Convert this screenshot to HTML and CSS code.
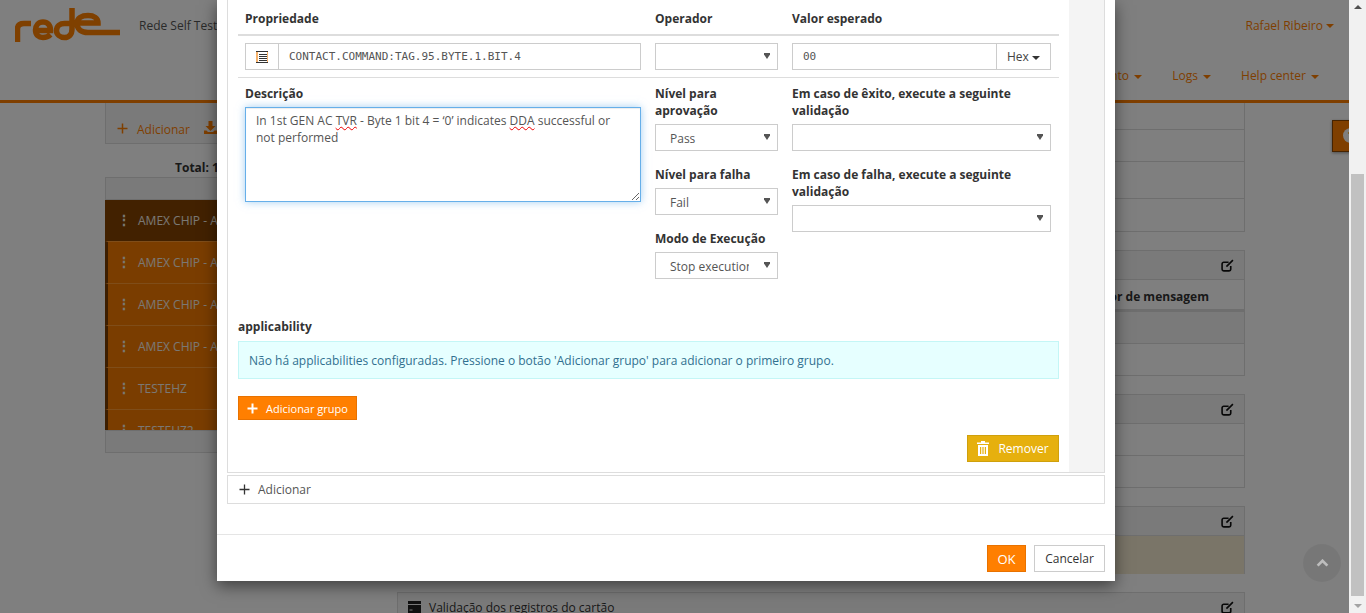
FILE: index.html
```html
<!DOCTYPE html>
<html lang="pt">
<head>
<meta charset="utf-8">
<title>Rede Self Test</title>
<link rel="stylesheet" href="styles.css">
</head>
<body>
<div class="viewport">
  <div class="page">
    <header class="site-header">
      <div class="brand">
        <svg class="logo" viewBox="0 0 105 34" width="105" height="34" aria-label="rede">
          <path d="M2.500 34V21C2.500 17 5 15.500 9 15.500H16M20.500 22.500H35.500C35.500 17 32.500 14 28 14C23.500 14 20.500 17.500 20.500 22C20.500 27 23.500 29.500 28 29.500C31 29.500 33.500 28.500 35.500 26.500M57 0V21C57 26.500 54 29.500 49.500 29.500C45 29.500 41.500 26.500 41.500 22.500C41.500 18 45 15.500 49.500 15.500H57M62 15H83C83 10 79 7.500 73 7.500C66.500 7.500 62 10 62 15.500C62 21 66 24.500 73 24.500H105" />
        </svg>
        <span class="brand-name">Rede Self Test</span>
        <span class="user">Rafael Ribeiro <i class="caret"></i></span>
      </div>
      <nav class="main-nav">
        <a>Relatório <i class="caret"></i></a>
        <a>Pagamento <i class="caret"></i></a>
        <a>Logs <i class="caret"></i></a>
        <a>Help center <i class="caret"></i></a>
      </nav>
    </header>
    <main class="workspace">
      <section class="side">
        <div class="side-tools">
          <svg class="tool-plus" viewBox="0 0 11 11" width="11" height="11"><path d="M5.500 0.500v10M0.500 5.500h10"/></svg>
          <span>Adicionar</span>
          <svg class="tool-down" viewBox="0 0 13 13" width="13" height="13"><path d="M4.500 0h4v5h3l-5 5-5-5h3zM0 9.500h2.500l1.500 1.500h5l1.500-1.500H13V13H0z"/></svg>
        </div>
        <div class="total">Total: 1</div>
        <div class="suite-list">
          <div class="suite-head"></div>
          <div class="suite-rows">
            <div class="suite suite-active"><b>⋮</b>AMEX CHIP - A</div>
            <div class="suite"><b>⋮</b>AMEX CHIP - A</div>
            <div class="suite"><b>⋮</b>AMEX CHIP - A</div>
            <div class="suite"><b>⋮</b>AMEX CHIP - A</div>
            <div class="suite"><b>⋮</b>TESTEHZ</div>
            <div class="suite"><b>⋮</b>TESTEHZ2</div>
          </div>
          <div class="suite-foot"></div>
        </div>
      </section>
      <section class="cards">
        <div class="card card-a"><div class="line"></div><div class="line"></div><div class="line"></div></div>
        <div class="card card-b">
          <div class="card-head"><svg class="edit" viewBox="0 0 12 12"><path d="M9 6.500V9.500a1.500 1.500 0 0 1-1.500 1.500H2.500A1.500 1.500 0 0 1 1 9.500V4.500A1.500 1.500 0 0 1 2.500 3H7M5 7l6-6"/></svg></div>
          <div class="card-th">Identificador de mensagem</div>
          <div class="card-row tint"></div>
          <div class="card-row"></div>
        </div>
        <div class="card card-c">
          <div class="card-head"><svg class="edit" viewBox="0 0 12 12"><path d="M9 6.500V9.500a1.500 1.500 0 0 1-1.500 1.500H2.500A1.500 1.500 0 0 1 1 9.500V4.500A1.500 1.500 0 0 1 2.500 3H7M5 7l6-6"/></svg></div>
          <div class="card-row"></div>
          <div class="card-row"></div>
        </div>
        <div class="card card-d">
          <div class="card-head"><svg class="edit" viewBox="0 0 12 12"><path d="M9 6.500V9.500a1.500 1.500 0 0 1-1.500 1.500H2.500A1.500 1.500 0 0 1 1 9.500V4.500A1.500 1.500 0 0 1 2.500 3H7M5 7l6-6"/></svg></div>
          <div class="card-note"></div>
        </div>
        <div class="card card-e">
          <div class="card-head card-head-title">
            <svg class="card-icon" viewBox="0 0 13 12"><path d="M0 0h13v3H0zM0 4h13v8H0zM1.500 8.500v1h3v-1z" fill-rule="evenodd"/></svg>
            <span>Validação dos registros do cartão</span>
            <svg class="edit" viewBox="0 0 12 12"><path d="M9 6.500V9.500a1.500 1.500 0 0 1-1.500 1.500H2.500A1.500 1.500 0 0 1 1 9.500V4.500A1.500 1.500 0 0 1 2.500 3H7M5 7l6-6"/></svg>
          </div>
        </div>
      </section>
    </main>
    <div class="help-tab"><span>?</span></div>
    <div class="overlay"></div>
    <div class="to-top"><svg viewBox="0 0 14 9" width="13" height="8"><path d="M1.500 7.500L7 2l5.500 5.500"/></svg></div>
    <div class="modal">
      <div class="modal-body">
        <div class="rule-panel">
          <div class="rule-form">
            <div class="form-grid form-heads">
              <label class="lbl">Propriedade</label>
              <label class="lbl">Operador</label>
              <label class="lbl">Valor esperado</label>
            </div>
            <div class="form-grid form-inputs">
              <div class="prop-group">
                <span class="prop-addon">
                  <svg viewBox="0 0 12 12" width="12" height="12"><rect width="12" height="12" fill="#f6b26b"/><rect x="2" y="1" width="9" height="10" fill="#fff"/><path d="M0 0.500h12M3 3.500h8M3 5.500h8M3 7.500h8M3 9.500h8M0 11.500h12" stroke="#333" fill="none"/></svg>
                </span>
                <input class="mono-input" type="text" value="CONTACT.COMMAND:TAG.95.BYTE.1.BIT.4">
              </div>
              <select class="sel"><option></option></select>
              <div class="value-group">
                <input class="mono-input" type="text" value="00">
                <span class="hex-btn">Hex <i class="caret caret-dark"></i></span>
              </div>
            </div>
            <div class="form-grid form-detail">
              <div class="field">
                <label class="lbl lbl-field">Descrição</label>
                <div class="desc-box">In 1st GEN AC <span class="typo">TVR</span> - Byte 1 bit 4 = ‘0’ indicates <span class="typo">DDA</span> successful or not performed</div>
              </div>
              <div class="field-stack">
                <div class="field">
                  <label class="lbl lbl-field">Nível para aprovação</label>
                  <select class="sel"><option>Pass</option></select>
                </div>
                <div class="field">
                  <label class="lbl lbl-field">Nível para falha</label>
                  <select class="sel"><option>Fail</option></select>
                </div>
                <div class="field">
                  <label class="lbl lbl-field">Modo de Execução</label>
                  <select class="sel"><option>Stop execution</option></select>
                </div>
              </div>
              <div class="field-stack">
                <div class="field">
                  <label class="lbl lbl-field">Em caso de êxito, execute a seguinte validação</label>
                  <select class="sel"><option></option></select>
                </div>
                <div class="field">
                  <label class="lbl lbl-field">Em caso de falha, execute a seguinte validação</label>
                  <select class="sel"><option></option></select>
                </div>
              </div>
            </div>
            <h4 class="lbl appl-title">applicability</h4>
            <div class="alert-info">Não há applicabilities configuradas. Pressione o botão 'Adicionar grupo' para adicionar o primeiro grupo.</div>
            <div class="group-row">
              <button class="btn btn-orange btn-small" type="button"><svg viewBox="0 0 11 11" width="11" height="11"><path d="M5.500 0.500v10M0.500 5.500h10"/></svg>Adicionar grupo</button>
            </div>
            <div class="remove-row">
              <button class="btn btn-gold" type="button"><svg viewBox="0 0 12 15" width="12" height="15"><path d="M4 0h4v1.500h4V3H0V1.500h4zM1 4h10v11H1zM3 6v7h1.200V6zM5.400 6v7h1.200V6zM7.800 6v7H9V6z" fill-rule="evenodd"/></svg>Remover</button>
            </div>
          </div>
          <div class="rule-strip"></div>
        </div>
        <div class="add-panel"><svg viewBox="0 0 11 11" width="11" height="11"><path d="M5.500 0.500v10M0.500 5.500h10"/></svg>Adicionar</div>
      </div>
      <footer class="modal-footer">
        <button class="btn btn-orange btn-ok" type="button">OK</button>
        <button class="btn btn-plain" type="button">Cancelar</button>
      </footer>
    </div>
  </div>
  <div class="scrollbar">
    <span class="arrow-up"></span>
    <div class="scroll-track"><div class="scroll-thumb"></div></div>
    <span class="arrow-down"></span>
  </div>
</div>
</body>
</html>
```
FILE: styles.css
```css
* { box-sizing: border-box; }
html, body { margin: 0; height: 100%; overflow: hidden; }
body { font-family: "Open Sans", "Noto Sans", sans-serif; font-size: 12px; color: #333; background: #fff; }
.viewport { display: flex; width: 1366px; height: 613px; }
.page { position: relative; flex: 1; height: 613px; overflow: hidden; background: #fff; }

/* background page */
.site-header { height: 103px; border-bottom: 3px solid #ff7f00; display: flex; flex-direction: column; }
.brand { display: flex; align-items: center; height: 52px; padding: 0 15px 2px; color: #555; }
.logo { flex: none; }
.logo path { fill: none; stroke: #ff8000; stroke-width: 5.500; }
.brand-name { margin-left: 19px; }
.user { margin-left: auto; color: #ff7f00; white-space: nowrap; }
.caret { display: inline-block; width: 0; height: 0; border: 4px solid transparent; border-top-color: currentColor; border-bottom: 0; vertical-align: middle; }
.main-nav { display: flex; justify-content: flex-end; gap: 30px; padding: 15px 30px 0 0; color: #ff7f00; }
.main-nav a { white-space: nowrap; }
.main-nav .caret { margin-left: 2px; }
.workspace { display: flex; padding-left: 105px; width: 1245px; }
.side { width: 292px; flex: none; }
.side-tools { height: 41px; border: 1px solid #ddd; border-top: 0; background: #f5f5f5; color: #ff7f00; padding: 18px 0 0 11px; display: flex; align-items: flex-start; }
.tool-plus { margin: 2px 9px 0 0; }
.tool-plus path { stroke: #ff7f00; stroke-width: 1.500; fill: none; }
.tool-down { margin: 0 0 0 14px; fill: #ff7f00; }
.total { font-weight: 700; padding-left: 70px; margin-top: 15px; height: 18px; }
.suite-list { width: 280px; }
.suite-head { height: 23px; border: 1px solid #ddd; background: #f5f5f5; }
.suite-rows { height: 230px; overflow: hidden; }
.suite { height: 42px; padding-left: 9px; line-height: 40px; background: #f57a00; color: #f4f0e8; border-left: 3px solid #7a3c00; border-top: 1px solid #ff9a33; white-space: nowrap; }
.suite b { display: inline-block; width: 21px; font-size: 14px; }
.suite-active { height: 41px; padding-left: 12px; background: #844200; border: 0; }
.suite-foot { height: 23px; border: 1px solid #ddd; background: #f5f5f5; }
.cards { flex: 1; display: flex; flex-direction: column; gap: 18px; }
.card { border: 1px solid #ddd; }
.card-a { height: 129px; border-top: 0; }
.line { height: 32px; border-bottom: 1px solid #ddd; }
.line:first-child { height: 27px; }
.line:last-child { height: 37px; }
.card-b { height: 126px; }
.card-c { height: 94px; }
.card-d { height: 68px; }
.card-e { height: 40px; }
.card-head { height: 29px; background: #f5f5f5; border-bottom: 1px solid #ddd; display: flex; align-items: center; justify-content: flex-end; padding-right: 10px; }
.card-head-title { justify-content: flex-start; padding-left: 10px; }
.card-head-title .edit { margin-left: auto; }
.card-icon { width: 13px; height: 12px; fill: #222; margin-right: 8px; flex: none; }
.edit { width: 13px; height: 13px; fill: none; stroke: #111; stroke-width: 1.500; }
.card-th { height: 32px; border-bottom: 3px solid #ddd; font-weight: 700; text-align: right; padding: 8px 35px 0 0; }
.card-row { height: 32px; border-bottom: 1px solid #ddd; }
.card-row:last-child { border-bottom: 0; }
.tint { background: #f5f5f5; }
.card-note { height: 38px; background: #f5ead0; }
.help-tab { position: absolute; left: 1332px; top: 120px; width: 40px; height: 32px; background: #ff7f00; border: 1px solid #8c4600; box-shadow: 0 1px 3px rgba(0,0,0,.4); padding: 7px 0 0 10px; }
.help-tab span { display: block; width: 15px; height: 15px; border-radius: 50%; background: #fff; color: #ff7f00; font-weight: 700; font-size: 11px; line-height: 15px; text-align: center; }
.to-top { position: absolute; left: 1303px; top: 544px; width: 38px; height: 38px; border-radius: 50%; background: rgba(0,0,0,.06); display: flex; align-items: center; justify-content: center; }
.to-top path { fill: none; stroke: #bdbdbd; stroke-width: 3; }
.overlay { position: absolute; inset: 0; background: rgba(0,0,0,.5); }

/* modal */
.modal { position: absolute; left: 217px; top: 0; width: 898px; height: 581px; background: #fff; box-shadow: 0 5px 15px rgba(0,0,0,.5); display: flex; flex-direction: column; }
.modal-body { flex: 1; padding: 0 10px; }
.rule-panel { display: flex; height: 473px; border: solid #ddd; border-width: 0 1px 1px; }
.rule-form { flex: 1; padding: 10px 10px 0; min-width: 0; }
.rule-strip { width: 35px; background: #f4f4f4; flex: none; }
.form-grid { display: grid; grid-template-columns: 396px 123px 259px; column-gap: 14px; padding: 0 7px; }
.lbl { display: block; font-size: 12px; font-weight: 700; line-height: 17px; color: #333; margin: 0; }
.lbl-field { margin-bottom: 5px; }
.form-heads { padding-bottom: 7px; border-bottom: 2px solid #ddd; }
.form-inputs { padding-top: 7px; padding-bottom: 7px; border-bottom: 1px solid #ddd; }
.form-detail { padding-top: 7px; padding-bottom: 39px; }
.prop-group, .value-group { display: flex; height: 27px; border: 1px solid #ccc; }
.prop-addon { width: 33px; flex: none; border-right: 1px solid #ccc; display: flex; align-items: center; justify-content: center; }
.mono-input { flex: 1; min-width: 0; border: 0; outline: 0; padding: 0 10px; font-family: "DejaVu Sans Mono", monospace; font-size: 11px; color: #555; background: #fff; }
.hex-btn { width: 54px; flex: none; border-left: 1px solid #ccc; text-align: center; line-height: 26px; color: #444; white-space: nowrap; }
.caret-dark { color: #333; }
.sel { display: block; width: 100%; height: 27px; border: 1px solid #ccc; border-radius: 0; background: #fff url("data:image/svg+xml,%3Csvg xmlns='http://www.w3.org/2000/svg' width='6' height='6'%3E%3Cpath d='M0 0h6v1.500L3 6 0 1.500z' fill='%23555'/%3E%3C/svg%3E") no-repeat right 7px top 9px; -webkit-appearance: none; appearance: none; padding: 2px 28px 0 14px; font-family: inherit; font-size: 12px; color: #555; outline: 0; }
.field-stack { display: flex; flex-direction: column; gap: 15px; }
.desc-box { height: 95px; border: 1px solid #66afe9; box-shadow: inset 0 1px 1px rgba(0,0,0,.075), 0 0 8px rgba(102,175,233,.6); padding: 4px 10px; line-height: 17px; font-size: 12px; color: #555; background: #fff; overflow: auto; resize: vertical; }
.typo { text-decoration: underline wavy #e00; text-decoration-thickness: 1px; }
.appl-title { margin-bottom: 6px; }
.alert-info { height: 38px; border: 1px solid #c4f6f6; background: #e6ffff; color: #31708f; line-height: 37px; padding-left: 10px; }
.group-row { margin-top: 17px; }
.remove-row { margin-top: 15px; display: flex; justify-content: flex-end; }
.btn { font-family: inherit; font-size: 12px; border-radius: 0; cursor: pointer; display: inline-flex; align-items: center; justify-content: center; padding: 0; }
.btn-orange { background: #ff7f00; border: 1px solid #e87200; color: #fff; }
.btn-small { width: 119px; height: 24px; gap: 8px; justify-content: flex-start; padding-left: 8px; font-size: 11px; }
.btn-small svg path { stroke: #fff; stroke-width: 2; fill: none; }
.btn-gold { width: 92px; height: 27px; gap: 9px; background: #e6b00e; border: 1px solid #cfa00c; color: #fff; }
.btn-gold svg { fill: #fff; }
.add-panel { height: 29px; margin-top: 2px; border: 1px solid #ddd; display: flex; align-items: center; gap: 8px; padding-left: 11px; color: #555; }
.add-panel svg path { stroke: #333; stroke-width: 1.300; fill: none; }
.modal-footer { height: 47px; padding: 10px 10px 0; border-top: 1px solid #e5e5e5; display: flex; justify-content: flex-end; gap: 8px; }
.btn-ok { width: 39px; height: 27px; font-size: 13px; }
.btn-plain { width: 71px; height: 27px; background: #fff; border: 1px solid #ccc; color: #333; }

/* scrollbar */
.scrollbar { width: 17px; flex: none; background: #f1f1f1; display: flex; flex-direction: column; align-items: center; }
.arrow-up, .arrow-down { flex: none; width: 0; height: 0; border: 4px solid transparent; margin: 5px 0; }
.arrow-up { border-bottom-color: #505050; border-top: 0; }
.arrow-down { border-top-color: #a3a3a3; border-bottom: 0; }
.scroll-track { flex: 1; width: 100%; display: flex; flex-direction: column; justify-content: flex-end; padding: 0 2px 3px; }
.scroll-thumb { height: 422px; background: #c1c1c1; }
```
